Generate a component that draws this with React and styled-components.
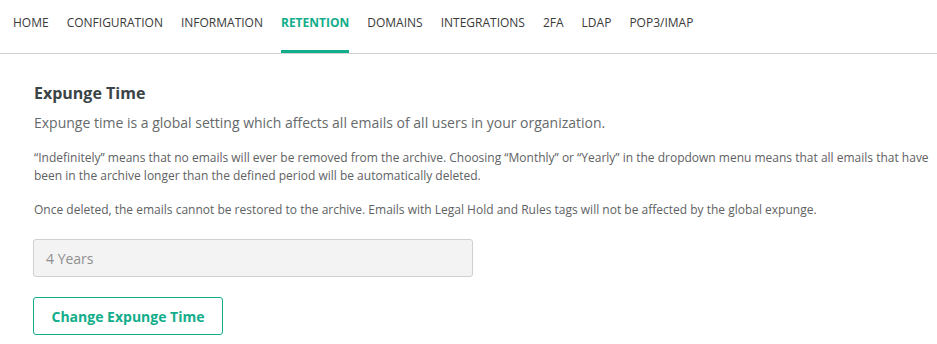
import React from "react";
import styled, { createGlobalStyle } from "styled-components";

const Global = createGlobalStyle`
  html, body { margin: 0; padding: 0; background: #fff; }
  body { font-family: "Open Sans", "Noto Sans", sans-serif; }
  * { box-sizing: border-box; }
`;

const Nav = styled.nav`
  display: flex;
  align-items: stretch;
  gap: 18px;
  height: 54px;
  padding-left: 13px;
  border-bottom: 1px solid #d3d3d3;
`;

const Tab = styled.a`
  display: flex;
  align-items: flex-start;
  padding-top: 14px;
  font-size: 12px;
  line-height: 18px;
  text-transform: uppercase;
  text-decoration: none;
  color: ${(p) => (p.$active ? "#12ad8a" : "#3a3a3a")};
  font-weight: ${(p) => (p.$active ? 700 : 400)};
  border-bottom: 3px solid ${(p) => (p.$active ? "#12ad8a" : "transparent")};
`;

const Content = styled.main`
  padding: 28px 6px 0 33px;
  display: flex;
  flex-direction: column;
`;

const Title = styled.h2`
  margin: 0;
  padding-left: 1px;
  font-size: 16px;
  line-height: 22px;
  font-weight: 700;
  color: #3b4446;
`;

const Lead = styled.p`
  margin: 9px 0 0;
  padding-left: 1px;
  font-size: 14px;
  line-height: 20px;
  color: #666a6b;
`;

const Note = styled.p`
  margin: ${(p) => p.$mt || "0"} 0 0;
  padding-left: 1px;
  font-size: 12px;
  line-height: 18px;
  color: #5e6263;
`;

const Field = styled.div`
  margin-top: 20px;
  width: 440px;
  height: 38px;
  display: flex;
  align-items: center;
  padding: 0 12px;
  background: #f3f3f3;
  border: 1px solid #cfcfcf;
  border-radius: 3px;
  font-size: 14px;
  color: #8f8f8f;
`;

const Button = styled.button`
  margin-top: 20px;
  align-self: flex-start;
  width: 190px;
  height: 38px;
  background: #fff;
  border: 1px solid #12ad8a;
  border-radius: 3px;
  color: #12ad8a;
  font-family: inherit;
  font-size: 14px;
  font-weight: 700;
  cursor: pointer;
`;

const tabs = ["Home", "Configuration", "Information", "Retention", "Domains", "Integrations", "2FA", "LDAP", "POP3/IMAP"];

export default function App() {
  return (
    <>
      <Global />
      <Nav>
        {tabs.map((t) => (
          <Tab key={t} $active={t === "Retention"}>{t}</Tab>
        ))}
      </Nav>
      <Content>
        <Title>Expunge Time</Title>
        <Lead>Expunge time is a global setting which affects all emails of all users in your organization.</Lead>
        <Note $mt="16px">
          “Indefinitely” means that no emails will ever be removed from the archive. Choosing “Monthly” or “Yearly” in the dropdown menu means that all emails that have been in the archive longer than the defined period will be automatically deleted.
        </Note>
        <Note $mt="16px">
          Once deleted, the emails cannot be restored to the archive. Emails with Legal Hold and Rules tags will not be affected by the global expunge.
        </Note>
        <Field>4 Years</Field>
        <Button>Change Expunge Time</Button>
      </Content>
    </>
  );
}
